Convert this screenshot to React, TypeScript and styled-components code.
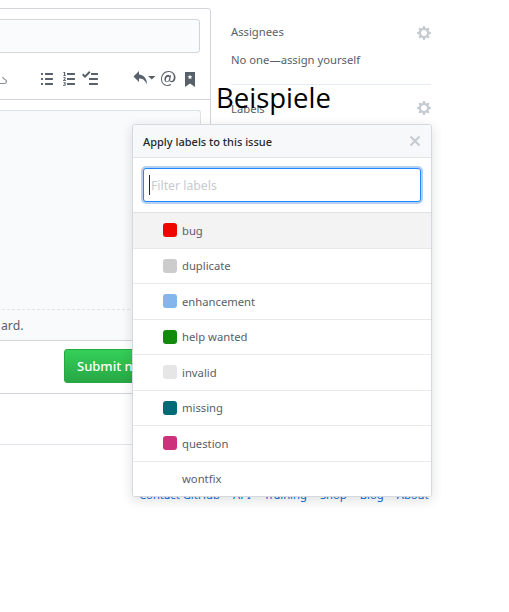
import React from 'react';
import styled, { createGlobalStyle } from 'styled-components';

const GlobalStyle = createGlobalStyle`
  html, body {
    margin: 0;
    padding: 0;
    background: #fff;
  }
  * {
    box-sizing: border-box;
  }
`;

const Page = styled.div`
  position: relative;
  width: 509px;
  height: 612px;
  overflow: hidden;
  font-family: 'Noto Sans', 'Open Sans', sans-serif;
  font-size: 11.25px;
  color: #586069;
`;

const Columns = styled.div`
  display: flex;
  gap: 20px;
  margin-left: -40px;
  padding-top: 8px;
`;

const Main = styled.div`
  width: 251px;
  flex: none;
`;

const Editor = styled.div`
  height: 333px;
  background: #fff;
  border: 1px solid #d1d5da;
  border-radius: 3px;
`;

const TitleInput = styled.div`
  height: 34px;
  margin: 10px 10px 0;
  background: #fafbfc;
  border: 1px solid #d1d5da;
  border-radius: 3px;
`;

const Toolbar = styled.div`
  height: 47px;
  display: flex;
  align-items: center;
  padding-top: 5px;
  border-bottom: 1px solid #d1d5da;
`;

const WriteArea = styled.div`
  height: 230px;
  margin: 10px 9px 0 10px;
  background: #f9fafc;
  border: 1px solid #dfe2e5;
  border-bottom: none;
  border-radius: 3px 3px 0 0;
  display: flex;
  flex-direction: column;
  justify-content: flex-end;
`;

const DropHint = styled.div`
  height: 31px;
  padding: 7px 0 0 29px;
  border-top: 1px dashed #dfe2e5;
  font-size: 12.25px;
  line-height: 18px;
  white-space: nowrap;
`;

const FormActions = styled.div`
  height: 53px;
  padding: 8px 0 0 104px;
  border-bottom: 1px solid #d1d5da;
`;

const SubmitButton = styled.button`
  width: 140px;
  height: 34px;
  padding: 0 12px;
  font: 500 13px 'Noto Sans', sans-serif;
  text-align: left;
  white-space: nowrap;
  color: #fff;
  background: linear-gradient(#34d058, #28a745);
  border: 1px solid #28a745;
  border-radius: 3px;
`;

const Spacer = styled.div`
  height: 51px;
  border-bottom: 1px solid #e1e4e8;
`;

const Sidebar = styled.aside`
  width: 200px;
  flex: none;
  padding-top: 15px;
`;

const SidebarSection = styled.section`
  height: 61px;
  & + & {
    padding-top: 15px;
    border-top: 1px solid #e6ebf1;
  }
`;

const SectionHead = styled.div`
  display: flex;
  justify-content: space-between;
  align-items: center;
  height: 18px;
  line-height: 18px;
`;

const SectionBody = styled.div`
  margin-top: 10px;
  line-height: 18px;
`;

const GearIcon = styled.svg<{ $raised?: boolean }>`
  width: 14px;
  height: 16px;
  margin: ${(p) => (p.$raised ? '0 0 2px' : '2px 0 0')};
  fill: #c6cbd1;
`;

const ToolIcon = styled.svg<{ $before: number }>`
  flex: none;
  height: 16px;
  margin-left: ${(p) => p.$before}px;
  fill: #586069;
`;

const AttachStroke = styled.path`
  fill: none;
  stroke: #8a9096;
  stroke-width: 1.2;
`;

const Footer = styled.div`
  display: flex;
  gap: 13px;
  position: absolute;
  left: 139px;
  top: 487px;
  line-height: 16px;
  font-size: 11.25px;
  color: #0366d6;
  white-space: nowrap;
`;

const Heading = styled.h1`
  position: absolute;
  left: 216px;
  top: 75px;
  margin: 0;
  font-family: 'Open Sans', sans-serif;
  font-size: 27.5px;
  font-weight: 400;
  line-height: 46px;
  color: #000;
`;

const Popover = styled.div`
  position: absolute;
  left: 132px;
  top: 124px;
  width: 300px;
  height: 373px;
  background: #fff;
  border: 1px solid #d5d8dc;
  border-radius: 3px;
  box-shadow: 0 3px 12px rgba(27, 31, 35, 0.15);
  overflow: hidden;
`;

const PopoverHeader = styled.div`
  display: flex;
  align-items: center;
  justify-content: space-between;
  height: 33px;
  padding: 0 10px;
  background: #f6f8fa;
  border-bottom: 1px solid #e1e4e8;
  font-size: 11px;
  font-weight: 500;
  color: #24292e;
`;

const CloseIcon = styled.svg`
  width: 12px;
  height: 16px;
  fill: #c6cbd1;
`;

const FilterBox = styled.div`
  position: relative;
  height: 55px;
  padding: 10px;
  border-bottom: 1px solid #dfe2e5;
`;

const FilterInput = styled.input`
  display: block;
  width: 100%;
  height: 34px;
  padding: 0 7px;
  font: 12.25px 'Noto Sans', sans-serif;
  color: #24292e;
  border: 1px solid #2188ff;
  border-radius: 3px;
  outline: none;
  box-shadow: 0 0 0 2px rgba(3, 102, 214, 0.3);
  &::placeholder {
    color: #c6cbd1;
    opacity: 1;
  }
`;

const TextCaret = styled.span`
  position: absolute;
  left: 16px;
  top: 17px;
  width: 1px;
  height: 20px;
  background: #24292e;
`;

const LabelRow = styled.div<{ $active?: boolean }>`
  display: flex;
  align-items: center;
  height: 35.5px;
  padding-left: 30px;
  background: ${(p) => (p.$active ? '#f3f3f3' : '#fff')};
  border-bottom: 1px solid #e9e9e9;
  &:last-child {
    border-bottom: none;
    padding-bottom: 2px;
  }
`;

const Swatch = styled.span<{ $color?: string }>`
  flex: none;
  width: 14px;
  height: 14px;
  margin-right: 5px;
  border-radius: 3px;
  background: ${(p) => p.$color || 'transparent'};
`;

const labels = [
  { name: 'bug', color: '#ee0701' },
  { name: 'duplicate', color: '#cccccc' },
  { name: 'enhancement', color: '#84b6eb' },
  { name: 'help wanted', color: '#128a0c' },
  { name: 'invalid', color: '#e6e6e6' },
  { name: 'missing', color: '#006b75' },
  { name: 'question', color: '#cc317c' },
  { name: 'wontfix' },
];

const footerLinks = ['Contact GitHub', 'API', 'Training', 'Shop', 'Blog', 'About'];

const gearPath =
  'M14 8.77v-1.6l-1.94-.64-.45-1.09.88-1.84-1.13-1.13-1.81.91-1.09-.45-.69-1.92h-1.6l-.63 1.94-1.11.45-1.84-.88-1.13 1.13.91 1.81-.45 1.09L0 7.23v1.59l1.94.64.45 1.09-.88 1.84 1.13 1.13 1.81-.91 1.09.45.69 1.92h1.59l.63-1.94 1.11-.45 1.84.88 1.13-1.13-.92-1.81.47-1.09L14 8.75v.02zM7 11c-1.66 0-3-1.34-3-3s1.34-3 3-3 3 1.34 3 3-1.34 3-3 3z';

const icons = {
  unordered:
    'M2 13c0 .59 0 1-.59 1H.59C0 14 0 13.59 0 13c0-.59 0-1 .59-1h.81c.59 0 .59.41.59 1H2zm2.59-9h6.81c.59 0 .59-.41.59-1 0-.59 0-1-.59-1H4.59C4 2 4 2.41 4 3c0 .59 0 1 .59 1zM1.41 7H.59C0 7 0 7.41 0 8c0 .59 0 1 .59 1h.81c.59 0 .59-.41.59-1 0-.59 0-1-.59-1h.01zm0-5H.59C0 2 0 2.41 0 3c0 .59 0 1 .59 1h.81c.59 0 .59-.41.59-1 0-.59 0-1-.59-1h.01zm10 5H4.59C4 7 4 7.41 4 8c0 .59 0 1 .59 1h6.81c.59 0 .59-.41.59-1 0-.59 0-1-.59-1h.01zm0 5H4.59C4 12 4 12.41 4 13c0 .59 0 1 .59 1h6.81c.59 0 .59-.41.59-1 0-.59 0-1-.59-1h.01z',
  ordered:
    'M12 13c0 .59 0 1-.59 1H4.59C4 14 4 13.59 4 13c0-.59 0-1 .59-1h6.81c.59 0 .59.41.59 1H12zM4.59 4h6.81c.59 0 .59-.41.59-1 0-.59 0-1-.59-1H4.59C4 2 4 2.41 4 3c0 .59 0 1 .59 1zm6.81 3H4.59C4 7 4 7.41 4 8c0 .59 0 1 .59 1h6.81c.59 0 .59-.41.59-1 0-.59 0-1-.59-1zM2 1h-.72c-.3.19-.58.25-1.03.34V2H1v2.14H.16V5H3v-.86h-.84V1H2zm.25 8.13c-.17 0-.45.03-.66.06.53-.56 1.14-1.25 1.14-1.89C2.71 6.52 2.17 6 1.37 6c-.59 0-.97.2-1.38.64l.58.58c.19-.19.38-.38.64-.38.28 0 .48.16.48.52 0 .53-.77 1.2-1.7 2.06V10h3l-.09-.88h-.66l.01.01zm-.08 3.78v-.03c.44-.19.64-.47.64-.86 0-.7-.56-1.11-1.44-1.11-.48 0-.89.19-1.28.52l.55.64c.25-.2.44-.31.69-.31.27 0 .42.13.42.36 0 .27-.2.44-.86.44v.75c.83 0 .98.17.98.47 0 .25-.23.38-.58.38-.28 0-.56-.14-.81-.38l-.48.66c.3.36.77.58 1.41.58.83 0 1.53-.41 1.53-1.16 0-.5-.31-.81-.77-.94v-.01z',
  tasklist:
    'M15.41 9H7.59C7 9 7 8.59 7 8c0-.59 0-1 .59-1h7.81c.59 0 .59.41.59 1 0 .59 0 1-.59 1h.01zM9.59 4C9 4 9 3.59 9 3c0-.59 0-1 .59-1h5.81c.59 0 .59.41.59 1 0 .59 0 1-.59 1H9.59zM0 3.91l1.41-1.3L3 4.2 7.09 0 8.5 1.41 3 6.91l-3-3zM7.59 12h7.81c.59 0 .59.41.59 1 0 .59 0 1-.59 1H7.59C7 14 7 13.59 7 13c0-.59 0-1 .59-1z',
  reply: 'M6 3.5c3.92.44 8 3.125 8 10-2.312-5.062-4.75-6-8-6V11L.5 5.5 6 0v3.5zM15 5h7.500l-3.750 3.500z',
  mention:
    'M6.58 15c1.25 0 2.52-.31 3.56-.94l-.42-.94c-.84.52-1.89.83-3.03.83-3.23 0-5.64-2.08-5.64-5.72 0-4.37 3.23-7.18 6.58-7.18 3.45 0 5.22 2.19 5.22 5.2 0 2.39-1.34 3.86-2.5 3.86-1.05 0-1.36-.73-1.02-2.19l.73-3.75H8.98l-.16.73c-.42-.73-1.02-1.05-1.75-1.05-2.19 0-3.66 2.32-3.66 4.43 0 1.67.94 2.9 2.5 2.9 1.05 0 1.88-.52 2.61-1.36.11 1.15.94 1.36 2.19 1.36 2.09 0 3.82-1.61 3.82-4.7C14.53 3.11 11.91 0 7.56 0 3.2 0 0 3.51 0 8.09 0 12.46 3.03 15 6.58 15zm-.42-4.4c-.84 0-1.25-.63-1.25-1.56 0-1.47.84-3.28 2.19-3.28.53 0 .83.2 1.25.73l-.73 3.07c-.63.83-1.04 1.04-1.46 1.04z',
  bookmark:
    'M0 1h10v15l-5-3.600L0 16V1zm5 2.500L4.300 5.200l-1.800.1 1.400 1.100-.5 1.800L5 7.200l1.600 1-.5-1.800 1.400-1.100-1.800-.1L5 3.500z',
};

const Gear = ({ raised }: { raised?: boolean }) => (
  <GearIcon viewBox="0 0 14 16" $raised={raised}>
    <path fillRule="evenodd" d={gearPath} />
  </GearIcon>
);

const Tool = ({ w, d, before }: { w: number; d: string; before: number }) => (
  <ToolIcon viewBox={`0 0 ${w} 16`} width={w} $before={before}>
    <path fillRule="evenodd" d={d} />
  </ToolIcon>
);

export default function App() {
  return (
    <Page>
      <GlobalStyle />
      <Columns>
        <Main>
          <Editor>
            <TitleInput />
            <Toolbar>
              <ToolIcon viewBox="0 0 10 16" width={10} $before={36}>
                <AttachStroke d="M0 12.500H7.500C10 12.500 10 9 8 8.500 6.500 8 6 7 5.500 6" />
              </ToolIcon>
              <Tool w={12} d={icons.unordered} before={34} />
              <Tool w={12} d={icons.ordered} before={10} />
              <Tool w={16} d={icons.tasklist} before={7} />
              <Tool w={23} d={icons.reply} before={35} />
              <Tool w={15} d={icons.mention} before={5} />
              <Tool w={10} d={icons.bookmark} before={9} />
            </Toolbar>
            <WriteArea>
              <DropHint>ard.</DropHint>
            </WriteArea>
          </Editor>
          <FormActions>
            <SubmitButton>Submit new issue</SubmitButton>
          </FormActions>
          <Spacer />
        </Main>
        <Sidebar>
          <SidebarSection>
            <SectionHead>
              Assignees
              <Gear />
            </SectionHead>
            <SectionBody>No one—assign yourself</SectionBody>
          </SidebarSection>
          <SidebarSection>
            <SectionHead>
              Labels
              <Gear raised />
            </SectionHead>
          </SidebarSection>
        </Sidebar>
      </Columns>
      <Footer>
        {footerLinks.map((link) => (
          <span key={link}>{link}</span>
        ))}
      </Footer>
      <Heading>Beispiele</Heading>
      <Popover>
        <PopoverHeader>
          Apply labels to this issue
          <CloseIcon viewBox="0 0 12 16">
            <path
              fillRule="evenodd"
              d="M7.48 8l3.75 3.75-1.48 1.48L6 9.480l-3.750 3.750-1.480-1.480L4.520 8 .770 4.250l1.480-1.480L6 6.520l3.750-3.750 1.480 1.480L7.480 8z"
            />
          </CloseIcon>
        </PopoverHeader>
        <FilterBox>
          <FilterInput placeholder="Filter labels" readOnly />
          <TextCaret />
        </FilterBox>
        {labels.map((label, i) => (
          <LabelRow key={label.name} $active={i === 0}>
            <Swatch $color={label.color} />
            <span>{label.name}</span>
          </LabelRow>
        ))}
      </Popover>
    </Page>
  );
}
